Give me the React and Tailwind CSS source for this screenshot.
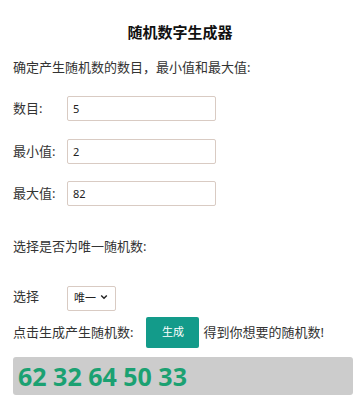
import { useState } from "react";

const font = { fontFamily: '"Noto Sans", "Noto Sans CJK SC", sans-serif' };

function Row({ label, value, onChange, className = "" }) {
  return (
    <div className={`flex items-center h-[25px] ${className}`}>
      <span className="w-[54px] text-[13px] text-[#333]">{label}</span>
      <input
        value={value}
        onChange={(e) => onChange(e.target.value)}
        className="w-[149px] h-[25px] border border-[#d9cbc3] rounded-[2px] px-[5px] text-[11px] text-[#222] outline-none"
      />
    </div>
  );
}

export default function App() {
  const [count, setCount] = useState("5");
  const [min, setMin] = useState("2");
  const [max, setMax] = useState("82");
  const [unique, setUnique] = useState("唯一");

  return (
    <div className="w-[360px] h-[417px] bg-white px-[13px] pt-[22px] flex flex-col" style={font}>
      <h1 className="text-[15px] leading-[20px] font-bold text-center text-[#111]">随机数字生成器</h1>
      <p className="mt-[15px] text-[13px] leading-[20px] text-[#333]">确定产生随机数的数目，最小值和最大值:</p>

      <Row label="数目:" value={count} onChange={setCount} className="mt-[19px]" />
      <Row label="最小值:" value={min} onChange={setMin} className="mt-[18px]" />
      <Row label="最大值:" value={max} onChange={setMax} className="mt-[17px]" />

      <p className="mt-[30px] text-[13px] leading-[20px] text-[#333]">选择是否为唯一随机数:</p>

      <div className="mt-[28px] flex items-center h-[25px]">
        <span className="w-[54px] text-[13px] text-[#333]">选择</span>
        <div className="relative w-[49px] h-[25px]">
          <select
            value={unique}
            onChange={(e) => setUnique(e.target.value)}
            className="appearance-none w-full h-full border border-[#d9cbc3] rounded-[2px] pl-[6px] text-[11px] text-[#222] bg-white outline-none"
          >
            <option>唯一</option>
            <option>不唯一</option>
          </select>
          <svg viewBox="0 0 10 10" className="absolute right-[8px] top-[9px] w-[8px] h-[8px] pointer-events-none">
            <path d="M1.5 3 L5 6.5 L8.5 3" fill="none" stroke="#222" strokeWidth="1.8" />
          </svg>
        </div>
      </div>

      <div className="mt-[8px] flex items-center h-[31px] text-[13px] text-[#333]">
        <span>点击生成产生随机数:</span>
        <button className="ml-[13px] w-[53px] h-[31px] bg-[#139b8a] rounded-[2px] text-white text-[11px]">生成</button>
        <span className="ml-[4px]">得到你想要的随机数!</span>
      </div>

      <div className="mt-[9px] h-[38px] w-[340px] bg-[#cccccc] rounded-[3px] flex items-center px-[5px]">
        <span className="text-[25px] font-bold text-[#1ba172] leading-none" style={{ fontFamily: '"Open Sans", sans-serif' }}>
          62 32 64 50 33
        </span>
      </div>
    </div>
  );
}
